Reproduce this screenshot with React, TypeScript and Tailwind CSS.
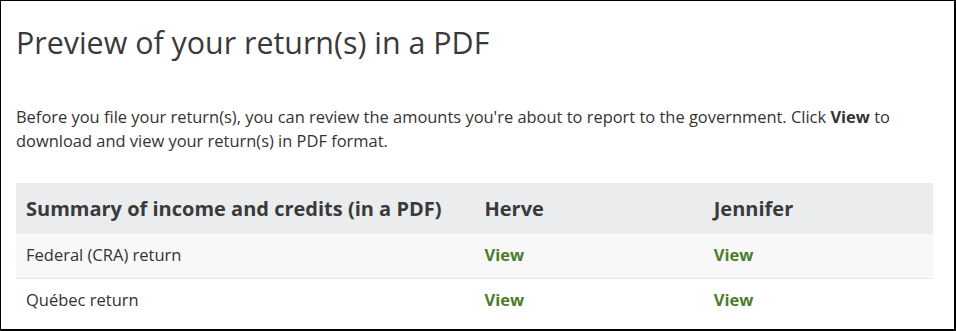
const rows = [
  { label: "Federal (CRA) return", bg: "bg-[#f8f8f8]" },
  { label: "Québec return", bg: "bg-white" },
];

const people = ["Herve", "Jennifer"];

export default function App() {
  return (
    <div className="h-[331px] w-[956px] border-l border-t border-r-2 border-b-2 border-black bg-white font-['Open_Sans',sans-serif] text-[#333]">
      <div className="px-[15px]">
        <h1 className="pt-[22px] text-[30.4px] leading-[40px] text-[#3a3a3a]">Preview of your return(s) in a PDF</h1>

        <p className="mt-[42px] text-[16.45px] leading-[24px]">
          Before you file your return(s), you can review the amounts you're about to report to the government. Click{" "}
          <b className="font-bold">View</b> to download and view your return(s) in PDF format.
        </p>

        <table className="mt-[30px] w-[917px] table-fixed border-collapse">
          <thead>
            <tr className="bg-[#ebecee] h-[51px]">
              <th className="w-1/2 px-[10px] text-left text-[20px] font-bold text-[#3a3a3a]">Summary of income and credits (in a PDF)</th>
              {people.map((p) => (
                <th key={p} className="w-1/4 px-[10px] text-left text-[20px] font-bold text-[#3a3a3a]">
                  {p}
                </th>
              ))}
            </tr>
          </thead>
          <tbody>
            {rows.map((r, i) => (
              <tr key={r.label} className={`${r.bg} h-[44px] ${i === 0 ? "border-b border-[#e6e6e6]" : ""}`}>
                <td className="px-[10px] text-[16.5px]">{r.label}</td>
                {people.map((p) => (
                  <td key={p} className="px-[10px] text-[16.5px] font-bold text-[#4b7d28]">
                    View
                  </td>
                ))}
              </tr>
            ))}
          </tbody>
        </table>
      </div>
    </div>
  );
}
